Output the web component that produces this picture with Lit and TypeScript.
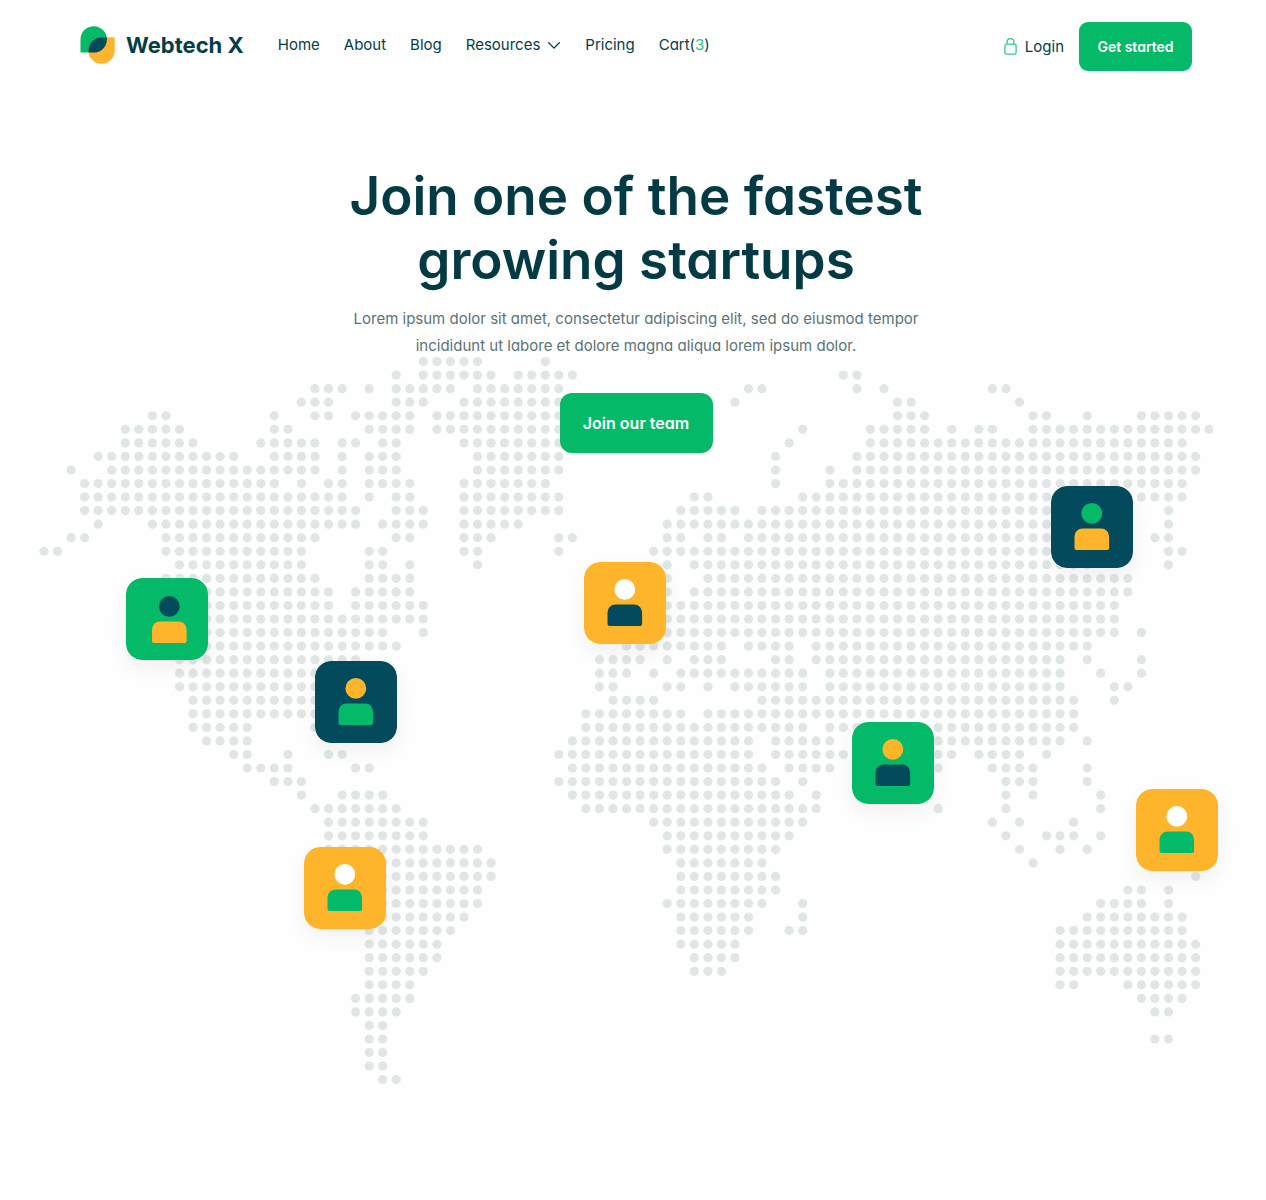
import { LitElement, html, svg, css } from "lit";
import { customElement, property } from "lit/decorators.js";

const PITCH = 13.548;
const MAP_WIDTH = 1174;
const MAP_HEIGHT = 728;

/** One entry per row of the dotted map; each token is a column or a range of columns. */
const MAP_ROWS: string[] = [
  "28-32 37",
  "26 28-33 35-39 59-60",
  "20-22 24 26-30 32-38 52-53 60 62 70-71",
  "19-21 26-28 31-38 51 63-64 72",
  "8-9 17 20-21 23-27 29-38 63-65 73-74 77 81-85",
  "6-10 17-18 24-27 29-38 56 61-65 67 69-70 73-86",
  "6-11 16-20 22-23 25-26 31-38 55 61-84",
  "4-14 17-20 22 24-26 32-38 54 60-85",
  "2 5-20 22 24-26 32-38 54 58 60-85",
  "3-17 19 21-22 24-27 31-37 54 58-84",
  "3-22 24 26-27 31-38 48-49 56-84",
  "3-23 26-28 31-38 47-51 53-78 83",
  "4 8-23 25-28 31-35 46-78 83",
  "2-3 9-20 26-27 31-33 38-39 46-47 49-50 52-78 82-83",
  "0-1 9-19 24-25 31-32 38 45-78 83-84",
  "10-19 24-25 27 32 46 48-77 83",
  "9-20 24-27 46 49-80",
  "10-21 23-27 46 48-80",
  "10-21 23-28 46-79",
  "10-28 46-79",
  "10-25 28 46-79 81",
  "10-26 43-50 52-55 57-77",
  "10-23 41-44 46 48-50 54-55 57-75 77 81",
  "10-20 41-43 45 47-56 58-75 78 81",
  "10-20 41-42 46-47 49 51-56 58-75 79-80",
  "11-20 42-45 53-76 79",
  "11-20 40-47 49-76",
  "11-15 20 40-56 58-76",
  "12-15 39-52 54-58 66-75 77",
  "14-15 18 21-22 38-52 54-59 66-67 69-72 74",
  "15-18 23-24 39-53 55-58 66 70-73 77",
  "17-19 38-54 56 71-73 77",
  "19 22-25 39-55 57 71 73 78",
  "20-26 40-57 66 71 78",
  "21-28 45-56 70 72 76",
  "21-28 46-55 71 74-76 78",
  "21-32 46-54 72 75 77",
  "24-33 47-53 73",
  "24-33 47-54 85",
  "24-32 47-54 80-81 83",
  "24-32 46-53 56 78-81 83",
  "24-31 47-52 56 77-84",
  "24-30 47-52 55-56 75-84",
  "24-29 47-51 75-85",
  "24-29 48-51 75-85",
  "24-28 48-50 75-85",
  "24-27 75-76 80-85",
  "23-27 81-84",
  "23-26 82-83",
  "24-25",
  "24-25 82-83",
  "24-25",
  "24-25",
  "25-26",
];

interface Pin {
  x: number;
  y: number;
  tile: string;
  head: string;
  body: string;
  icon?: [number, number];
}

const GREEN = "#04ba68";
const NAVY = "#034b5c";
const AMBER = "#feb52b";

const PINS: Pin[] = [
  { x: 87, y: 221, tile: GREEN, head: NAVY, body: AMBER, icon: [26, 18] },
  { x: 276, y: 304, tile: NAVY, head: AMBER, body: GREEN },
  { x: 545, y: 205, tile: AMBER, head: "#fff", body: NAVY },
  { x: 1012, y: 129, tile: NAVY, head: GREEN, body: AMBER },
  { x: 813, y: 365, tile: GREEN, head: AMBER, body: NAVY },
  { x: 1097, y: 432, tile: AMBER, head: "#fff", body: GREEN },
  { x: 265, y: 490, tile: AMBER, head: "#fff", body: GREEN },
];

function columns(row: string): number[] {
  return row.split(" ").flatMap((token) => {
    const [from, to = from] = token.split("-").map(Number);
    return Array.from({ length: to - from + 1 }, (_, i) => from + i);
  });
}

@customElement("team-pin")
export class TeamPin extends LitElement {
  @property({ attribute: false }) pin!: Pin;

  static styles = css`
    :host {
      display: block;
    }
    .tile {
      display: block;
      width: 82px;
      height: 82px;
      border-radius: 16px;
      box-shadow: 0 8px 20px rgba(8, 15, 52, 0.06);
    }
  `;

  render() {
    const { tile, head, body, icon = [23.5, 17] } = this.pin;
    return html`
      <svg class="tile" viewBox="0 0 82 82" aria-hidden="true">
        <rect width="82" height="82" rx="16" fill=${tile} />
        <g transform="translate(${icon[0]} ${icon[1]})">
          <circle cx="17.3" cy="10.4" r="10.4" fill=${head} />
          <path
            d="M8 25.5h18.6a8 8 0 0 1 8 8V45a2 2 0 0 1-2 2H2a2 2 0 0 1-2-2V33.5a8 8 0 0 1 8-8Z"
            fill=${body}
          />
        </g>
      </svg>
    `;
  }
}

@customElement("team-map")
export class TeamMap extends LitElement {
  static styles = css`
    :host {
      display: block;
      position: relative;
    }
    .dots {
      display: block;
      width: 100%;
      height: auto;
      fill: #e0e6e5;
    }
    .pin {
      position: absolute;
    }
  `;

  render() {
    return html`
      <svg class="dots" viewBox="0 0 ${MAP_WIDTH} ${MAP_HEIGHT}" aria-hidden="true">
        ${MAP_ROWS.map((row, r) =>
          columns(row).map(
            (c) => svg`<circle cx=${(5 + c * PITCH).toFixed(1)} cy=${(4.6 + r * PITCH).toFixed(1)} r="4.6" />`
          )
        )}
      </svg>
      ${PINS.map(
        (pin) => html`<team-pin
          class="pin"
          .pin=${pin}
          style="left:${(pin.x / MAP_WIDTH) * 100}%;top:${(pin.y / MAP_HEIGHT) * 100}%"
        ></team-pin>`
      )}
    `;
  }
}

@customElement("site-header")
export class SiteHeader extends LitElement {
  static styles = css`
    :host {
      display: block;
      color: #053d47;
    }
    .bar {
      display: flex;
      align-items: center;
      justify-content: space-between;
      padding: 22px 74px 0 80px;
    }
    .main {
      display: flex;
      align-items: center;
      gap: 34px;
      padding-bottom: 4px;
    }
    .brand {
      display: flex;
      align-items: center;
      gap: 11px;
      color: #053d47;
      font-size: 22px;
      line-height: 24px;
      font-weight: 700;
      text-decoration: none;
      white-space: nowrap;
    }
    .links {
      display: flex;
      align-items: center;
      gap: 24px;
    }
    .link {
      display: flex;
      align-items: center;
      padding: 0;
      border: 0;
      background: none;
      color: inherit;
      font: inherit;
      font-size: 15px;
      line-height: 20px;
      text-decoration: none;
      white-space: nowrap;
      cursor: pointer;
    }
    .menu {
      gap: 7px;
    }
    .count {
      color: #1cca7c;
    }
    .actions {
      display: flex;
      align-items: center;
      gap: 15px;
      padding-bottom: 0;
    }
    .login {
      gap: 8px;
    }
    .start {
      display: flex;
      align-items: center;
      justify-content: center;
      box-sizing: border-box;
      min-width: 113px;
      height: 49px;
      padding: 0 16px;
      border-radius: 9px;
      background: #04ba68;
      color: #fff;
      font-size: 14px;
      font-weight: 600;
      text-decoration: none;
      white-space: nowrap;
    }
  `;

  render() {
    return html`
      <header class="bar">
        <div class="main">
          <a class="brand" href="#">
            <svg width="35" height="38" viewBox="0 0 35 38" aria-hidden="true">
              <path d="M0.5 26.6V13.4a13.2 13.2 0 1 1 13.2 13.2Z" fill="#04ba68" />
              <path d="M34.7 11.3V24.5a13.2 13.2 0 1 1-13.2-13.2Z" fill="#feb52b" />
              <path
                d="M21.5 11.3H26.75A13.2 13.2 0 0 1 13.7 26.6H8.5A13.2 13.2 0 0 1 21.5 11.3Z"
                fill="#034b5c"
              />
            </svg>
            Webtech X
          </a>
          <nav class="links" aria-label="Main">
            <a class="link" href="#home">Home</a>
            <a class="link" href="#about">About</a>
            <a class="link" href="#blog">Blog</a>
            <button class="link menu" type="button" aria-haspopup="true">
              Resources
              <svg width="14" height="14" viewBox="0 0 14 14" fill="none" stroke="currentColor" stroke-width="1.3" stroke-linecap="round" stroke-linejoin="round" aria-hidden="true">
                <path d="M1.7 4.8 7 10.1 12.3 4.8" />
              </svg>
            </button>
            <a class="link" href="#pricing">Pricing</a>
            <a class="link" href="#cart">Cart(<span class="count">3</span>)</a>
          </nav>
        </div>
        <div class="actions">
          <a class="link login" href="#login">
            <svg width="13" height="17" viewBox="0 0 13 17" fill="none" stroke="#2fcd86" stroke-width="1.3" stroke-linejoin="round" aria-hidden="true">
              <rect x="0.9" y="6.2" width="11.2" height="9.9" rx="1.6" />
              <path d="M3.1 6.2V4.1a3.4 3.4 0 0 1 6.8 0V6.2" />
            </svg>
            Login
          </a>
          <a class="start" href="#start">Get started</a>
        </div>
      </header>
    `;
  }
}

@customElement("app-root")
export class AppRoot extends LitElement {
  static styles = css`
    :host {
      display: block;
      min-height: 100vh;
      background: #fefefe;
      font-family: Inter, "Open Sans", sans-serif;
      font-feature-settings: "cv11";
    }
    .hero {
      display: grid;
      grid-template-columns: minmax(0, 1fr);
      align-items: start;
      padding-bottom: 112px;
    }
    .map {
      grid-area: 1 / 1;
      margin: 286px 53px 0 39px;
    }
    .intro {
      grid-area: 1 / 1;
      z-index: 1;
      display: flex;
      flex-direction: column;
      align-items: center;
      padding: 93px 74px 0 80px;
      text-align: center;
    }
    .title {
      margin: 0;
      max-width: 620px;
      color: #043a43;
      font-size: 53px;
      line-height: 64px;
      font-weight: 600;
    }
    .lead {
      margin: 13px 0 34px;
      max-width: 620px;
      color: #5b7377;
      font-size: 15px;
      line-height: 27px;
    }
    .cta {
      display: flex;
      align-items: center;
      justify-content: center;
      box-sizing: border-box;
      min-width: 153px;
      height: 60px;
      padding: 0 23px;
      border-radius: 12px;
      background: #04ba68;
      color: #fff;
      font-size: 16px;
      font-weight: 600;
      text-decoration: none;
    }
  `;

  render() {
    return html`
      <site-header></site-header>
      <main class="hero">
        <team-map class="map"></team-map>
        <section class="intro">
          <h1 class="title">Join one of the fastest growing startups</h1>
          <p class="lead">
            Lorem ipsum dolor sit amet, consectetur adipiscing elit, sed do eiusmod tempor
            incididunt ut labore et dolore magna aliqua lorem ipsum dolor.
          </p>
          <a class="cta" href="#team">Join our team</a>
        </section>
      </main>
    `;
  }
}
